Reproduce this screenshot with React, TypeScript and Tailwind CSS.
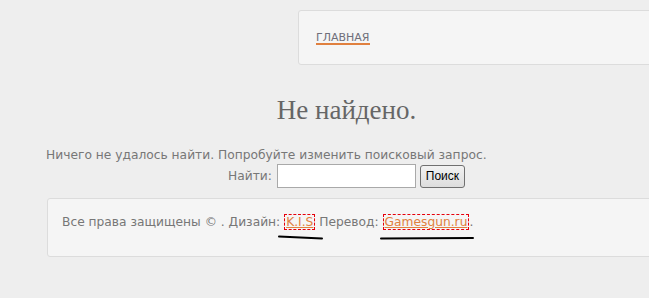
import React from "react";

export default function App() {
  return (
    <div className="relative h-[298px] w-[649px] overflow-hidden bg-[#eeeeee] font-['DejaVu_Sans',Verdana,sans-serif] text-[#777777]">
      <div className="pl-[298px] pt-[10px]">
        <div className="h-[55px] w-[400px] rounded-[3px] border border-[#dcdcdc] bg-[#f5f5f5] pl-[17px] pt-[21px] text-[11px] leading-[11px]">
          <a className="inline-block border-b-2 border-[#e0803f] text-[11px] leading-[11px] text-[#6f6f7a]">ГЛАВНАЯ</a>
        </div>
      </div>
      <div className="w-[647px] pl-[46px]">
        <h1 className="mt-[30px] text-center font-['Liberation_Serif',serif] text-[27px] leading-[30px] text-[#666666]">Не найдено.</h1>
        <p className="mt-[23px] text-[12.25px] leading-[15px] text-[#777777]">Ничего не удалось найти. Попробуйте изменить поисковый запрос.</p>
        <form className="mt-[1px] flex items-center justify-center" onSubmit={(e) => e.preventDefault()}>
          <label className="mr-[5px] text-[12.25px] text-[#777777]">Найти:</label>
          <input className="mr-[4px] h-[24px] w-[139px] border border-[#a9a9a9] bg-white" type="text" />
          <button className="h-[23px] w-[45px] rounded-[3px] border border-[#707070] bg-gradient-to-b from-[#f2f2f2] to-[#dddddd] font-['Liberation_Sans',Arial,sans-serif] text-[12px] text-black">Поиск</button>
        </form>
      </div>
      <div className="ml-[47px] mt-[10px] h-[59px] w-[620px] rounded-[3px] border border-[#dcdcdc] bg-[#f5f5f5] pl-[14px] pt-[16px] text-[12.25px] leading-[15px]">
        Все права защищены © . Дизайн:{" "}
        <a className="border border-dashed border-red-600 px-[1px] text-[#e0803f] underline decoration-[#e0803f]">K.I.S</a>{" "}
        Перевод:{" "}
        <a className="border border-dashed border-red-600 px-[1px] text-[#e0803f] underline decoration-[#e0803f]">Gamesgun.ru</a>.
      </div>
      <svg className="absolute left-0 top-0" width="649" height="298">
        <path d="M279 236.5 L322 238.5" stroke="#000" strokeWidth="2" strokeLinecap="round" fill="none" />
        <path d="M381 238.5 L473 238" stroke="#000" strokeWidth="2" strokeLinecap="round" fill="none" />
      </svg>
    </div>
  );
}
